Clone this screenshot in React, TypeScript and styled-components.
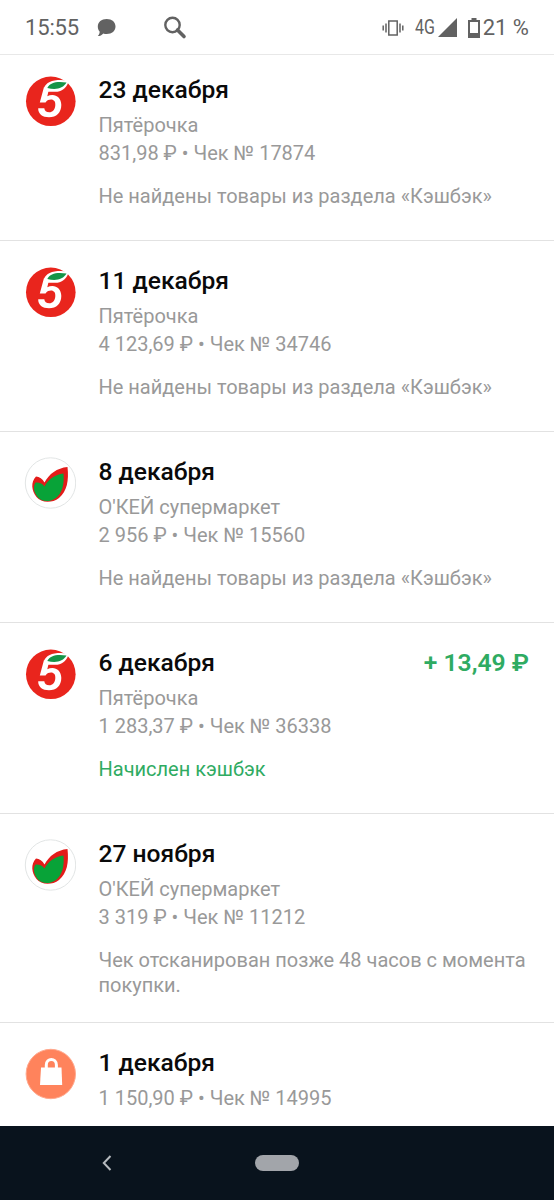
import React from 'react';
import styled, { createGlobalStyle } from 'styled-components';

const GlobalStyle = createGlobalStyle`
  * { box-sizing: border-box; }
  body { margin: 0; background: #fff; font-family: Roboto, "Noto Sans", sans-serif; }
`;

const Screen = styled.div`
  height: 1200px;
  display: flex;
  flex-direction: column;
  overflow: hidden;
  background: #fff;
`;

const StatusBar = styled.header`
  flex: none;
  height: 55px;
  border-bottom: 1px solid #e8e8e8;
  display: flex;
  align-items: center;
  justify-content: space-between;
  padding: 1px 25px 0;
  color: #626262;
`;

const StatusGroup = styled.div`
  display: flex;
  align-items: center;
`;

const Clock = styled.span`
  font-size: 22px;
  width: 72px;
  letter-spacing: -0.15px;
  white-space: nowrap;
`;

const Network = styled.span`
  font-size: 19.5px;
  width: 23px;
  margin-left: 11px;
  transform: scaleX(0.82);
  transform-origin: left;
`;

const Battery = styled.span`
  font-size: 22px;
  margin-left: 3px;
  white-space: nowrap;
`;

const Glyph = styled.svg<{ $gap?: number }>`
  display: block;
  flex: none;
  margin-left: ${(p) => p.$gap ?? 0}px;
`;

const List = styled.main`
  flex: 1;
  min-height: 0;
  overflow: hidden;
`;

const Row = styled.article<{ $first?: boolean }>`
  display: flex;
  min-height: ${(p) => (p.$first ? 186 : 191)}px;
  padding: ${(p) => (p.$first ? 20 : 25)}px 25px 24px 24px;
  border-bottom: 1px solid #e2e2e2;
`;

const Logo = styled.svg`
  display: block;
  flex: none;
  width: 52px;
  height: 52px;
  margin-right: 22.5px;
`;

const Details = styled.div`
  flex: 1;
  min-width: 0;
  padding-top: 1px;
  font-size: 20px;
  color: #999;
`;

const Heading = styled.div`
  display: flex;
  justify-content: space-between;
  height: 28px;
  line-height: 28px;
  margin-bottom: 8px;
`;

const DateTitle = styled.h2`
  margin: 0;
  font-size: 24.6px;
  font-weight: 500;
  color: #0a0a0a;
  white-space: nowrap;
`;

const Amount = styled.span`
  font-size: 24.7px;
  font-weight: 600;
  color: #2fab62;
  white-space: nowrap;
`;

const Line = styled.div`
  line-height: 27.5px;
  white-space: nowrap;
`;

const Note = styled.p<{ $green?: boolean }>`
  margin: 17px -12px 0 0;
  line-height: 25px;
  color: ${(p) => (p.$green ? '#2fab62' : '#999')};
`;

const NavBar = styled.nav`
  flex: none;
  height: 74px;
  display: grid;
  grid-template-columns: 213px 128px 213px;
  align-items: center;
  justify-items: center;
  background: #09131d;
`;

const HomePill = styled.span`
  width: 44px;
  height: 16px;
  border-radius: 8px;
  background: #a2a5aa;
`;

type Store = 'five' | 'okey' | 'bag';

const StoreLogo = ({ store }: { store: Store }) => {
  if (store === 'five') {
    return (
      <Logo viewBox="0 0 52 52">
        <circle cx="26.8" cy="26.3" r="24.8" fill="#e9251d" />
        <path d="M20 12L15.800 27.500H21.500C23 25.200 25 24.600 27 24.600C30 24.600 31.600 26.800 31.300 30.300C31 35 28.500 37.300 25.300 37.300C22.300 37.300 20.600 35.800 20.300 33.300H14.200C14 39 18.500 42.300 25 42.300C32.500 42.300 37.300 37.500 37.300 30C37.300 23.500 33 20 28.500 20C26.500 20 24.800 20.400 23.300 21.200L24.500 16Z" fill="#fff" />
        <path d="M20 13C22.500 6 31 3.800 45 5.500C43 12 39 16 33.500 16.800H22Z" fill="#fff" />
        <path d="M23.300 13C26 7.500 33 6 42.500 7.600C39 13.500 32 15.400 23.300 13Z" fill="#159447" />
      </Logo>
    );
  }
  if (store === 'okey') {
    return (
      <Logo viewBox="0 0 52 52">
        <circle cx="26.5" cy="26" r="25.2" fill="#fff" stroke="#e2e5e5" />
        <path d="M12 19.500C15.500 19.500 18.500 22 20.500 25.500C25 17 33 11 43.500 10C45 24 43 34 35 41C28 46.500 17 46 12.500 40C7.500 34 6.500 25 12 19.500Z" fill="#e31b19" />
        <path d="M11.500 25.500C15 25 18.500 26.500 20.500 29.500C24 22.500 31 17.500 39.500 16.500C40.500 28 38 36 32 41C26 45.500 17.500 45 13.500 40C9.500 35 9 29 11.500 25.500Z" fill="#08a338" />
      </Logo>
    );
  }
  return (
    <Logo viewBox="0 0 52 52">
      <circle cx="26.8" cy="26" r="24.7" fill="#ff835c" stroke="#ffa98e" />
      <path d="M22.300 21V17C22.300 9.700 32.400 9.700 32.400 17V21" fill="none" stroke="#fff" strokeWidth="3" />
      <path d="M17 19.500H37.500L38.200 37H16Z" fill="#fff" />
    </Logo>
  );
};

interface Receipt {
  store: Store;
  date: string;
  shop?: string;
  info: string;
  note?: string;
  cashback?: string;
}

const missing = 'Не найдены товары из раздела «Кэшбэк»';

const receipts: Receipt[] = [
  { store: 'five', date: '23 декабря', shop: 'Пятёрочка', info: '831,98 ₽ • Чек № 17874', note: missing },
  { store: 'five', date: '11 декабря', shop: 'Пятёрочка', info: '4 123,69 ₽ • Чек № 34746', note: missing },
  { store: 'okey', date: '8 декабря', shop: "О'КЕЙ супермаркет", info: '2 956 ₽ • Чек № 15560', note: missing },
  { store: 'five', date: '6 декабря', shop: 'Пятёрочка', info: '1 283,37 ₽ • Чек № 36338', note: 'Начислен кэшбэк', cashback: '+ 13,49 ₽' },
  { store: 'okey', date: '27 ноября', shop: "О'КЕЙ супермаркет", info: '3 319 ₽ • Чек № 11212', note: 'Чек отсканирован позже 48 часов с момента покупки.' },
  { store: 'bag', date: '1 декабря', info: '1 150,90 ₽ • Чек № 14995' },
];

export default function App() {
  return (
    <Screen>
      <GlobalStyle />
      <StatusBar>
        <StatusGroup>
          <Clock>15:55</Clock>
          <Glyph width="19" height="19" viewBox="0 0 19 19" fill="#626262">
            <path d="M9.7 1C15 1 18.5 4 18.5 8.5S15 16 9.7 16C8.4 16 7.3 15.8 6.3 15.4C5 17 3 18 .8 18C2.2 16.700 2.8 15 2.600 13.500C1.400 12.200.8 10.500.8 8.500C.8 4 4.400 1 9.700 1Z" />
          </Glyph>
          <Glyph $gap={47} width="24" height="24" viewBox="0 0 24 24" fill="none" stroke="#626262">
            <circle cx="9.500" cy="9" r="7.200" strokeWidth="2.400" />
            <path d="M14.500 14L21 20.500" strokeWidth="3.600" strokeLinecap="round" />
          </Glyph>
        </StatusGroup>
        <StatusGroup>
          <Glyph width="22" height="18" viewBox="0 0 22 18" fill="none" stroke="#626262" strokeWidth="1.500">
            <rect x="6.800" y="2" width="8.400" height="14" />
            <path d="M1.200 6.500V11.500M4 4.500V13.500M18 4.500V13.500M20.800 6.500V11.500" />
          </Glyph>
          <Network>4G</Network>
          <Glyph width="19" height="19" viewBox="0 0 19 19">
            <path d="M19 0V19H0Z" fill="#626262" />
          </Glyph>
          <Glyph $gap={11} width="12" height="20" viewBox="0 0 12 20">
            <path d="M3.500 0H8.500V2H12V20H0V2H3.500ZM2 4V15H10V4Z" fill="#626262" fillRule="evenodd" />
          </Glyph>
          <Battery>21 %</Battery>
        </StatusGroup>
      </StatusBar>
      <List>
        {receipts.map((r, i) => (
          <Row key={r.date} $first={i === 0}>
            <StoreLogo store={r.store} />
            <Details>
              <Heading>
                <DateTitle>{r.date}</DateTitle>
                {r.cashback && <Amount>{r.cashback}</Amount>}
              </Heading>
              {r.shop && <Line>{r.shop}</Line>}
              <Line>{r.info}</Line>
              {r.note && <Note $green={!!r.cashback}>{r.note}</Note>}
            </Details>
          </Row>
        ))}
      </List>
      <NavBar>
        <svg width="10" height="16" viewBox="0 0 10 16" fill="none" stroke="#b6babe" strokeWidth="2">
          <path d="M8.500 1L1.800 8L8.500 15" />
        </svg>
        <HomePill />
      </NavBar>
    </Screen>
  );
}
